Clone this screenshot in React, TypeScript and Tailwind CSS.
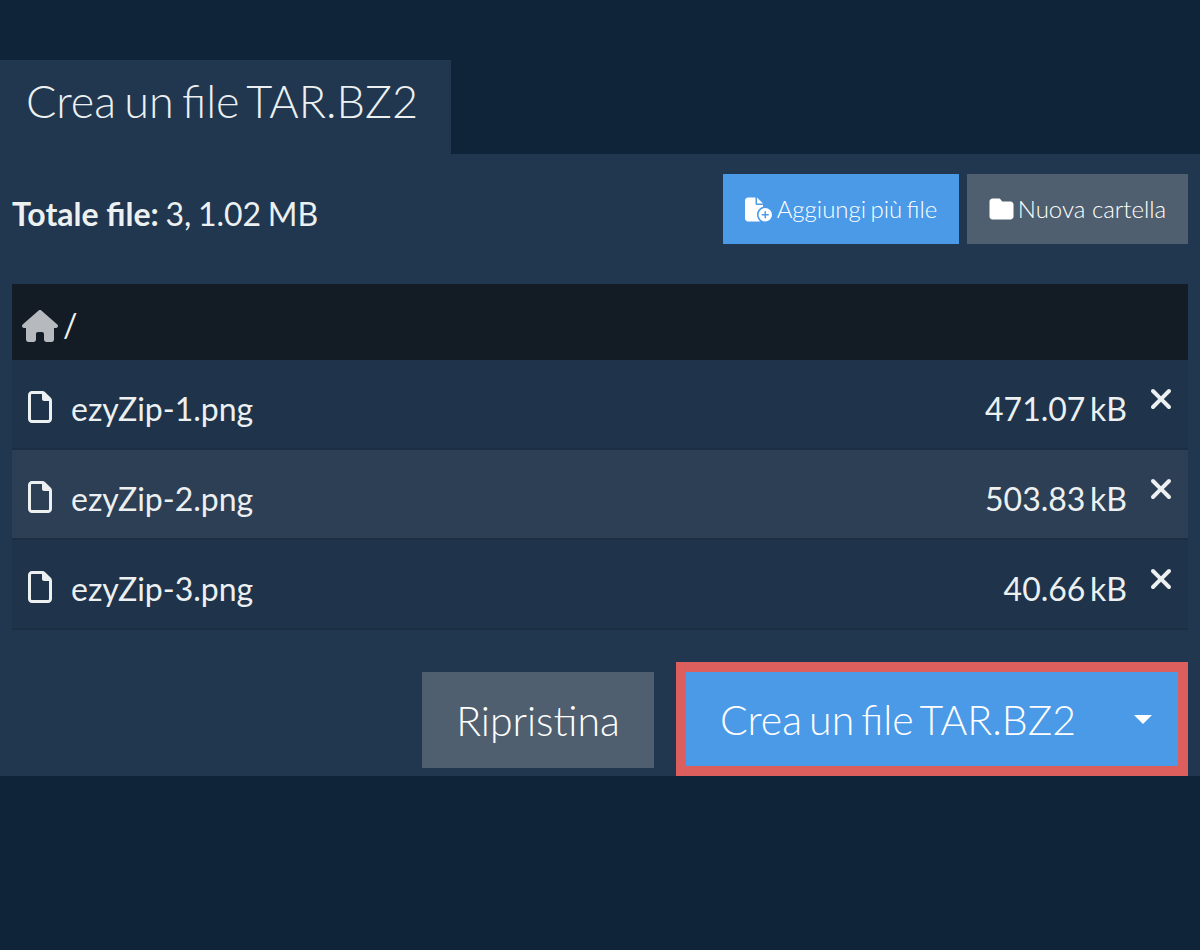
import { FaFileCirclePlus, FaFolder, FaHouse, FaRegFile, FaXmark } from "react-icons/fa6";

const files = [
  { name: "ezyZip-1.png", size: "471.07 kB", bg: "bg-[#1f344b]" },
  { name: "ezyZip-2.png", size: "503.83 kB", bg: "bg-[#2c3f55]" },
  { name: "ezyZip-3.png", size: "40.66 kB", bg: "bg-[#1f344b]" },
];

export default function App() {
  return (
    <div className="min-h-[950px] bg-[#0f2439] pt-[60px] font-['Lato','Liberation_Sans',sans-serif] text-[#ecf0f1] [font-variant-ligatures:common-ligatures] [word-spacing:-0.05em]">
      {/* Tab */}
      <div className="flex h-[94px] w-[451px] items-center bg-[#20374f] pb-[12px] pl-[26px] text-[45px] leading-none font-light [word-spacing:-0.09em]">
        Crea un file TAR.BZ2
      </div>

      {/* Panel */}
      <div className="h-[622px] bg-[#20374f] px-[12px] pt-[20px]">
        <div className="flex h-[70px] items-center justify-between">
          <p className="pt-[10px] text-[32px] leading-none [word-spacing:-0.05em]">
            <strong className="font-bold [word-spacing:0]">Totale file:</strong> 3, 1.02 MB
          </p>
          <div className="flex gap-[8px]">
            <button className="flex h-[70px] w-[236px] items-center justify-center bg-[#4a9ae8] text-[24px] leading-none font-light text-white [word-spacing:-0.09em]">
              <FaFileCirclePlus className="mr-[5px] h-[25px] w-[27px]" />
              Aggiungi più file
            </button>
            <button className="flex h-[70px] w-[221px] items-center justify-center bg-[#4f5f6f] text-[24px] leading-none font-light text-white">
              <FaFolder className="mr-[4px] h-[24px] w-[25px]" />
              Nuova cartella
            </button>
          </div>
        </div>

        {/* File list */}
        <div className="mt-[40px]">
          <div className="flex h-[76px] items-center bg-[#131b24] pl-[10px] text-[32px]">
            <FaHouse className="mt-[8px] h-[32px] w-[36px] text-[#b6babe]" />
            <span className="ml-[5px] pt-[6px] leading-none">/</span>
          </div>
          {files.map((file) => (
            <div
              key={file.name}
              className={`relative flex h-[90px] items-center border-b-2 border-[#1b2e42] pr-[61px] pl-[16px] text-[32px] ${file.bg}`}
            >
              <FaRegFile className="mt-[6px] h-[32px] w-[24px]" />
              <span className="ml-[19px] pt-[10px] leading-none">{file.name}</span>
              <span className="ml-auto pt-[10px] leading-none [word-spacing:-0.11em]">{file.size}</span>
              <FaXmark className="absolute top-[23px] right-[11px] h-[32px] w-[32px]" />
            </div>
          ))}
        </div>

        {/* Actions */}
        <div className="mt-[32px] flex justify-end">
          <button className="mt-[10px] flex h-[96px] w-[232px] items-center justify-center bg-[#4f5f6f] text-[41px] leading-none font-light text-white">
            Ripristina
          </button>
          <button className="ml-[22px] flex h-[114px] w-[512px] items-center border-[10px] border-[#dd5f5d] bg-[#4a9ae8] pr-[26px] pl-[34px] text-[41px] leading-none font-light text-white [word-spacing:-0.1em]">
            Crea un file TAR.BZ2
            <span className="ml-auto h-0 w-0 border-x-[9px] border-t-[9px] border-x-transparent border-t-white" />
          </button>
        </div>
      </div>
    </div>
  );
}
